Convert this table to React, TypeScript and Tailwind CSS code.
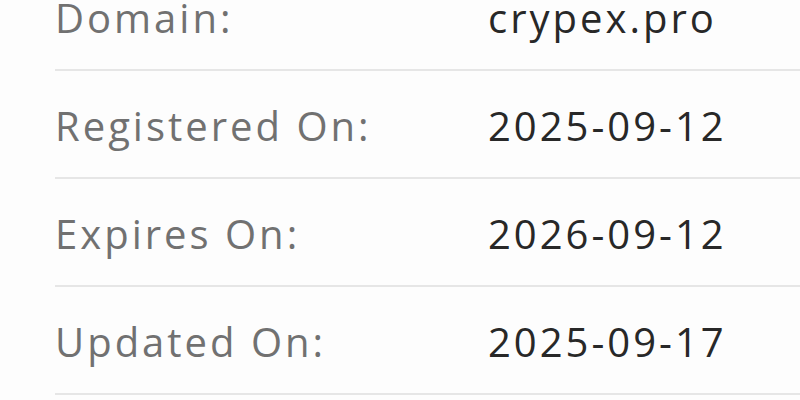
const rows = [
    { label: 'Domain:', value: 'crypex.pro' },
    { label: 'Registered On:', value: '2025-09-12' },
    { label: 'Expires On:', value: '2026-09-12' },
    { label: 'Updated On:', value: '2025-09-17' },
];

export default function App() {
    return (
        <div className="h-[400px] w-[800px] overflow-hidden bg-[#fdfdfd] font-['Open_Sans',sans-serif]">
            <div className="-mt-[37px] pl-[55px]">
                {rows.map((row) => (
                    <div
                        key={row.label}
                        className="flex h-[108px] items-center border-b-2 border-[#e6e6e6] pt-[4px] text-[40px] leading-none tracking-[3px]"
                    >
                        <span className="w-[433px] shrink-0 text-[#717171]">
                            {row.label}
                        </span>
                        <span className="text-[#282828]">{row.value}</span>
                    </div>
                ))}
            </div>
        </div>
    );
}
